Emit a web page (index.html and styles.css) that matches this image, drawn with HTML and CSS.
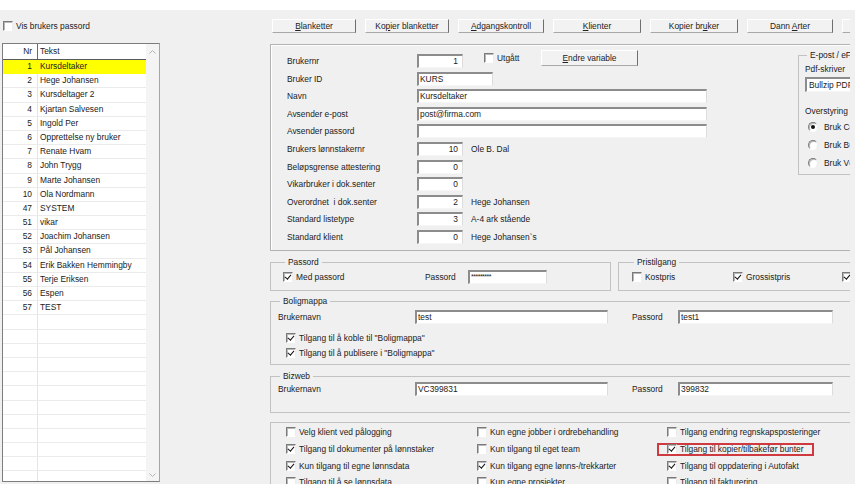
FILE: index.html
```html
<!DOCTYPE html>
<html lang="no">
<head>
  <meta charset="UTF-8" />
  <title>Brukere</title>
  <link rel="stylesheet" href="styles.css">
</head>
<body>
  <div class="topband"></div>
  <div class="main">

    <!-- brukerliste -->
    <div class="side">
      <label class="chk vis"><span class="cb"></span>Vis brukers passord</label>
      <div class="list">
        <div class="list-body">
          <div class="lrow lhead"><span class="nr">Nr</span><span class="tx">Tekst</span></div>
          <div class="lrow sel"><span class="nr">1</span><span class="tx">Kursdeltaker</span></div>
          <div class="lrow"><span class="nr">2</span><span class="tx">Hege Johansen</span></div>
          <div class="lrow"><span class="nr">3</span><span class="tx">Kursdeltager 2</span></div>
          <div class="lrow"><span class="nr">4</span><span class="tx">Kjartan Salvesen</span></div>
          <div class="lrow"><span class="nr">5</span><span class="tx">Ingold Per</span></div>
          <div class="lrow"><span class="nr">6</span><span class="tx">Opprettelse ny bruker</span></div>
          <div class="lrow"><span class="nr">7</span><span class="tx">Renate Hvam</span></div>
          <div class="lrow"><span class="nr">8</span><span class="tx">John Trygg</span></div>
          <div class="lrow"><span class="nr">9</span><span class="tx">Marte Johansen</span></div>
          <div class="lrow"><span class="nr">10</span><span class="tx">Ola Nordmann</span></div>
          <div class="lrow"><span class="nr">47</span><span class="tx">SYSTEM</span></div>
          <div class="lrow"><span class="nr">51</span><span class="tx">vikar</span></div>
          <div class="lrow"><span class="nr">52</span><span class="tx">Joachim Johansen</span></div>
          <div class="lrow"><span class="nr">53</span><span class="tx">Pål Johansen</span></div>
          <div class="lrow"><span class="nr">54</span><span class="tx">Erik Bakken Hemmingby</span></div>
          <div class="lrow"><span class="nr">55</span><span class="tx">Terje Eriksen</span></div>
          <div class="lrow"><span class="nr">56</span><span class="tx">Espen</span></div>
          <div class="lrow"><span class="nr">57</span><span class="tx">TEST</span></div>
          <div class="lrow"><span class="nr"></span><span class="tx"></span></div>
          <div class="lrow"><span class="nr"></span><span class="tx"></span></div>
          <div class="lrow"><span class="nr"></span><span class="tx"></span></div>
          <div class="lrow"><span class="nr"></span><span class="tx"></span></div>
          <div class="lrow"><span class="nr"></span><span class="tx"></span></div>
          <div class="lrow"><span class="nr"></span><span class="tx"></span></div>
          <div class="lrow"><span class="nr"></span><span class="tx"></span></div>
          <div class="lrow"><span class="nr"></span><span class="tx"></span></div>
          <div class="lrow"><span class="nr"></span><span class="tx"></span></div>
          <div class="lrow"><span class="nr"></span><span class="tx"></span></div>
          <div class="lrow"><span class="nr"></span><span class="tx"></span></div>
          <div class="lrow"><span class="nr"></span><span class="tx"></span></div>
        </div>
        <div class="vscroll">
          <svg width="7" height="4" viewBox="0 0 7 4"><path d="M0.5 3.5 L3.5 0.5 L6.5 3.5" fill="none" stroke="#b4b4b4" stroke-width="1"/></svg>
          <svg width="7" height="4" viewBox="0 0 7 4"><path d="M0.5 0.5 L3.5 3.5 L6.5 0.5" fill="none" stroke="#b4b4b4" stroke-width="1"/></svg>
        </div>
      </div>
    </div>

    <div class="content">
      <div class="toolbar">
        <span class="btn w84"><span><u>B</u>lanketter</span></span>
        <span class="btn w84"><span>Ko<u>p</u>ier blanketter</span></span>
        <span class="btn w86"><span><u>A</u>dgangskontroll</span></span>
        <span class="btn w88"><span><u>K</u>lienter</span></span>
        <span class="btn w88"><span>Kopier br<u>u</u>ker</span></span>
        <span class="btn w86"><span>Dann <u>A</u>rter</span></span>
        <span class="btn w86"><span>Slett bruker</span></span>
      </div>

      <!-- brukeropplysninger -->
      <div class="upper">
        <div class="fields">
          <div class="frow">
            <span class="lbl">Brukernr</span><span class="in num">1</span>
            <label class="chk utg"><span class="cb"></span>Utgått</label>
            <span class="btn endre"><span><u>E</u>ndre variable</span></span>
          </div>
          <div class="frow"><span class="lbl">Bruker ID</span><span class="in w76">KURS</span></div>
          <div class="frow"><span class="lbl">Navn</span><span class="in wide">Kursdeltaker</span></div>
          <div class="frow"><span class="lbl">Avsender e-post</span><span class="in wide">post@firma.com</span></div>
          <div class="frow"><span class="lbl">Avsender passord</span><span class="in wide"></span></div>
          <div class="frow"><span class="lbl">Brukers lønnstakernr</span><span class="in num">10</span><span class="info">Ole B. Dal</span></div>
          <div class="frow"><span class="lbl">Beløpsgrense attestering</span><span class="in num">0</span></div>
          <div class="frow"><span class="lbl">Vikarbruker i dok.senter</span><span class="in num">0</span></div>
          <div class="frow"><span class="lbl">Overordnet &nbsp;i dok.senter</span><span class="in num">2</span><span class="info">Hege Johansen</span></div>
          <div class="frow"><span class="lbl">Standard listetype</span><span class="in num">3</span><span class="info">A-4 ark stående</span></div>
          <div class="frow"><span class="lbl">Standard klient</span><span class="in num">0</span><span class="info">Hege Johansen`s</span></div>
        </div>
        <fieldset class="grp epost">
          <legend>E-post / eFaktura</legend>
          <div class="ep-lbl">Pdf-skriver</div>
          <div class="in ep-in">Bullzip PDF Printer</div>
          <div class="ep-over">Overstyring av pdf-skriver</div>
          <label class="rad"><span class="rb on"></span>Bruk Complete PDF</label>
          <label class="rad"><span class="rb"></span>Bruk Bullzip</label>
          <label class="rad"><span class="rb"></span>Bruk Vcl PDF</label>
        </fieldset>
      </div>

      <div class="grow">
        <fieldset class="grp pass">
          <legend>Passord</legend>
          <div class="g-row">
            <label class="chk w142"><span class="cb on"></span>Med passord</label>
            <span class="w43">Passord</span><span class="in pw">*********</span>
          </div>
        </fieldset>
        <fieldset class="grp pris">
          <legend>Pristilgang</legend>
          <div class="g-row">
            <label class="chk w101"><span class="cb"></span>Kostpris</label>
            <label class="chk w109"><span class="cb on"></span>Grossistpris</label>
            <label class="chk"><span class="cb on"></span>Utsalgspris</label>
          </div>
        </fieldset>
      </div>

      <fieldset class="grp bolig">
        <legend>Boligmappa</legend>
        <div class="g-row">
          <span class="w137">Brukernavn</span><span class="in user">test</span>
          <span class="w46">Passord</span><span class="in upw">test1</span>
        </div>
        <div class="bchecks">
          <label class="chk"><span class="cb on"></span>Tilgang til å koble til "Boligmappa"</label>
          <label class="chk"><span class="cb on"></span>Tilgang til å publisere i "Boligmappa"</label>
        </div>
      </fieldset>

      <fieldset class="grp bizweb">
        <legend>Bizweb</legend>
        <div class="g-row">
          <span class="w137">Brukernavn</span><span class="in user">VC399831</span>
          <span class="w46">Passord</span><span class="in upw">399832</span>
        </div>
      </fieldset>

      <div class="flags">
        <label class="chk"><span class="cb"></span>Velg klient ved pålogging</label>
        <label class="chk"><span class="cb"></span>Kun egne jobber i ordrebehandling</label>
        <label class="chk"><span class="cb"></span>Tilgang endring regnskapsposteringer</label>
        <label class="chk"><span class="cb on"></span>Tilgang til dokumenter på lønnstaker</label>
        <label class="chk"><span class="cb"></span>Kun tilgang til eget team</label>
        <label class="chk hl"><span class="cb on"></span>Tilgang til kopier/tilbakefør bunter</label>
        <label class="chk"><span class="cb on"></span>Kun tilgang til egne lønnsdata</label>
        <label class="chk"><span class="cb on"></span>Kun tilgang egne lønns-/trekkarter</label>
        <label class="chk"><span class="cb on"></span>Tilgang til oppdatering i Autofakt</label>
        <label class="chk"><span class="cb"></span>Tilgang til å se lønnsdata</label>
        <label class="chk"><span class="cb"></span>Kun egne prosjekter</label>
        <label class="chk"><span class="cb"></span>Tilgang til fakturering</label>
      </div>
    </div>
  </div>
</body>
</html>
```

FILE: styles.css
```css
* {
  box-sizing: border-box;
}
body {
  margin: 0;
  width: 855px;
  height: 484px;
  overflow: hidden;
  background-color: #f0f0f0;
  font-family: "Liberation Sans", Arial, sans-serif;
  font-size: 8.4px;
  color: #222;
}
u {
  text-decoration-thickness: 1px;
  text-underline-offset: 1px;
}
.topband {
  height: 10px;
  background-color: #fff;
}
.main {
  display: flex;
  height: 474px;
}

/* venstre liste */
.side {
  width: 160px;
  padding-left: 2px;
  display: flex;
  flex-direction: column;
  flex: none;
}
.vis {
  margin-top: 11px;
  padding-left: 1px;
}
.list {
  margin-top: 12px;
  height: 439px;
  display: flex;
  border: 1px solid #7d7d7d;
  border-right-color: #a5a5a5;
  background-color: #fff;
}
.list-body {
  flex: 1;
  overflow: hidden;
}
.lrow {
  display: flex;
  height: 14.2px;
  line-height: 13px;
  border-bottom: 1px solid #ebebeb;
  white-space: nowrap;
}
.lhead {
  height: 16px;
  line-height: 15px;
  border-bottom: 1px solid #5a5a5a;
}
.nr {
  width: 35px;
  flex: none;
  text-align: right;
  padding-right: 5px;
  border-right: 1px solid #e4e4e4;
}
.lhead .nr {
  border-right-color: #6a6a6a;
}
.tx {
  padding-left: 2px;
}
.sel {
  background-color: #ffff00;
  border-bottom-color: #ffff00;
}
.sel .nr {
  border-right-color: #ffff00;
}
.vscroll {
  width: 13px;
  flex: none;
  background-color: #f4f4f4;
  display: flex;
  flex-direction: column;
  justify-content: space-between;
  align-items: center;
  padding: 6px 0 4px;
}

/* høyre del */
.content {
  margin-left: 110px;
  width: 580px;
  flex: none;
  overflow: hidden;
}
.toolbar {
  display: flex;
  gap: 9px;
  height: 34px;
  padding: 9px 0 0 2px;
  white-space: nowrap;
}
.btn {
  height: 14px;
  flex: none;
  display: flex;
  align-items: center;
  justify-content: center;
  background-color: #f2f2f2;
  border: 1px solid;
  border-color: #fff #6e6e6e #a8a8a8 #fff;
  white-space: nowrap;
}
.w84 { width: 84px; }
.w86 { width: 86px; }
.w88 { width: 88px; }

.upper {
  display: flex;
  width: 800px;
  height: 207px;
  border: 1px solid #b2b2b2;
  box-shadow: inset 1px 1px 0 #fff;
  padding-left: 16px;
}
.fields {
  width: 511px;
  flex: none;
  margin-top: 7.2px;
}
.frow {
  display: flex;
  align-items: center;
  height: 17.6px;
  white-space: nowrap;
}
.lbl {
  width: 130px;
  flex: none;
}
.in {
  height: 14px;
  flex: none;
  background-color: #fff;
  border-style: solid;
  border-width: 2px 1px 1px 2px;
  border-color: #8c8c8c #dcdcdc #f6f6f6 #8c8c8c;
  padding-left: 1px;
  line-height: 11px;
  white-space: nowrap;
  overflow: hidden;
}
.num {
  width: 46px;
  text-align: right;
  padding-right: 4px;
}
.w76 { width: 76px; }
.wide { width: 290px; }
.info {
  margin-left: 8px;
}
.utg {
  align-self: flex-start;
  margin-top: 1px;
  margin-left: 21px;
  width: 57px;
}
.endre {
  align-self: flex-start;
  margin-top: -2px;
  width: 97px;
  height: 16px;
}

/* checkbox / radio */
.chk, .rad {
  display: flex;
  align-items: center;
  gap: 3px;
  height: 10px;
  white-space: nowrap;
  flex: none;
}
.cb, .rb {
  width: 10px;
  height: 10px;
  flex: none;
  display: inline-flex;
  align-items: center;
  justify-content: center;
  background-color: #fff;
  border: 1px solid;
  border-color: #7a7a7a #ececec #fff #7a7a7a;
  box-shadow: inset 1px 1px 0 #b8b8b8;
}
.cb.on::after {
  content: "";
  width: 2.5px;
  height: 5px;
  margin-top: -2px;
  border: solid #111;
  border-width: 0 1.6px 1.6px 0;
  transform: rotate(40deg);
}
.rb {
  border-radius: 50%;
}
.rb.on::after {
  content: "";
  width: 4px;
  height: 4px;
  border-radius: 50%;
  background-color: #111;
}

/* grupper */
.grp {
  margin: 0;
  padding: 0;
  border: 1px solid #c2c2c2;
  min-width: 0;
  white-space: nowrap;
}
.grp legend {
  margin-left: 2px;
  padding: 0 3px;
  line-height: 10px;
  height: 10px;
  white-space: nowrap;
}
.epost {
  align-self: flex-start;
  flex: none;
  width: 200px;
  margin-top: 5px;
  padding: 0 0 2px 6px;
}
.ep-lbl {
  margin-top: 4px;
  line-height: 10px;
}
.ep-in {
  margin-top: 3px;
  height: 15px;
  line-height: 12px;
  padding-left: 2px;
}
.ep-over {
  margin-top: 14px;
  line-height: 10px;
}
.rad {
  height: 18px;
  padding-left: 3px;
  gap: 6px;
}
.epost .rad:first-of-type {
  margin-top: 2px;
}

.grow {
  display: flex;
  gap: 7px;
  margin-top: 6px;
  width: 600px;
}
.g-row {
  display: flex;
  align-items: center;
  height: 14px;
  white-space: nowrap;
}
.pass {
  width: 341px;
  flex: none;
  padding: 0 0 6px 12px;
}
.pass .g-row, .pris .g-row {
  margin-top: 3px;
}
.pris {
  flex: 1;
  padding: 0 0 6px 13px;
}
.w142 { width: 142px; }
.w43 { width: 43px; flex: none; }
.w101 { width: 101px; }
.w109 { width: 109px; }
.pw {
  width: 79px;
  font-size: 7px;
  line-height: 9px;
  letter-spacing: -0.5px;
}

.bolig, .bizweb {
  width: 600px;
  padding-left: 7px;
}
.bolig {
  margin-top: 5px;
  padding-bottom: 6px;
}
.bolig .g-row {
  margin-top: 4px;
}
.bizweb {
  margin-top: 6px;
  padding-bottom: 16px;
}
.bizweb .g-row {
  margin-top: 1px;
}
.w137 { width: 137px; flex: none; }
.w46 { width: 46px; flex: none; margin-left: 24px; }
.user { width: 193px; }
.upw { width: 155px; }
.bchecks {
  margin-top: 9px;
  padding-left: 8px;
  display: flex;
  flex-direction: column;
  gap: 5px;
}

.flags {
  margin-top: 9px;
  width: 600px;
  height: 80px;
  border: 1px solid #c2c2c2;
  padding: 1px 0 0 15px;
  display: grid;
  grid-template-columns: 191px 190px 190px;
  grid-auto-rows: 16.7px;
  align-items: center;
}
.hl {
  height: 13px;
  margin-left: -10px;
  padding: 0 8px;
  border: 2px solid #cf3a40;
  justify-self: start;
}
```
